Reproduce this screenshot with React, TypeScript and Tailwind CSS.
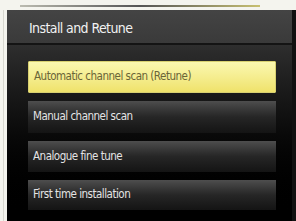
export default function App() {
  const items = [
    { t: "Manual channel scan", h: "h-[32px]" },
    { t: "Analogue fine tune", h: "h-[31px]" },
    { t: "First time installation", h: "h-[30px]" },
  ];
  return (
    <div className="h-[221px] w-[296px] overflow-hidden bg-[#f4f4ee] font-['DejaVu_Sans_Condensed','Liberation_Sans',sans-serif]">
      <div className="flex h-[10px] items-start px-[20px] pt-[5px]">
        <div className="h-[2px] w-[240px] bg-gradient-to-r from-[#bbbbb0] via-[#555] to-[#c8c070]" />
      </div>
      <div className="flex h-[211px]">
        <div className="ml-[3px] w-[1px] bg-[#d8d8d0]" />
        <div className="ml-[3px] flex flex-1 flex-col border-r-[4px] border-[#111]">
          <div className="flex h-[35px] items-center border-b-2 border-[#141414] bg-gradient-to-b from-[#444] to-[#3a3a3a] pl-[22px] pt-[3px] text-[14px] tracking-[-0.6px] text-[#f2f2f2]">
            Install and Retune
          </div>
          <div className="flex flex-1 flex-col gap-[8px] bg-gradient-to-b from-[#2e2e2e] via-[#0a0a0a] to-black pl-[21px] pr-[16px] pt-[16px]">
            <div className="flex h-[32px] items-center rounded-[1px] border border-[#d8d070] bg-gradient-to-b from-[#fbf8b0] to-[#efe26a] pl-[5px] text-[11.5px] tracking-[-0.5px] text-[#6a6538]">
              Automatic channel scan (Retune)
            </div>
            {items.map((i) => (
              <div
                key={i.t}
                className={`flex ${i.h} items-center bg-gradient-to-b from-[#4e4e4e] via-[#262626] to-[#141414] pl-[5px] text-[11.5px] tracking-[-0.5px] text-[#e4e4e4]`}
              >
                {i.t}
              </div>
            ))}
          </div>
        </div>
      </div>
    </div>
  );
}
